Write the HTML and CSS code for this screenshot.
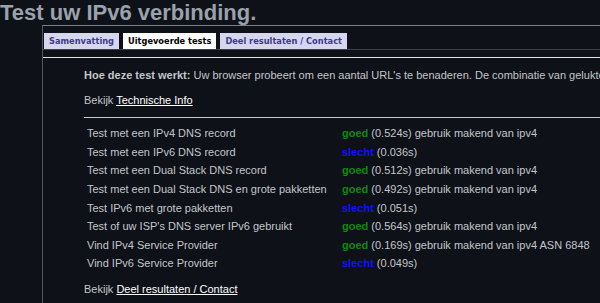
FILE: index.html
```html
<!DOCTYPE html>
<html lang="nl">
<head>
<meta charset="utf-8">
<title>Test uw IPv6 verbinding.</title>
<link rel="stylesheet" href="styles.css">
</head>
<body>
<h1 class="title">Test uw IPv6 verbinding.</h1>
<div class="frame">
  <div class="tabs">
    <span class="tab">Samenvatting</span>
    <span class="tab active">Uitgevoerde tests</span>
    <span class="tab">Deel resultaten / Contact</span>
  </div>
  <div class="panel">
    <p class="intro"><b>Hoe deze test werkt:</b> Uw browser probeert om een aantal URL's te benaderen. De combinatie van gelukte en mislukte pogingen bepaalt de uitslag.</p>
    <p class="see">Bekijk <a href="#">Technische Info</a></p>
    <hr class="rule">
    <table class="results">
      <tr><td class="name">Test met een IPv4 DNS record</td><td><span class="good">goed</span> (0.524s) gebruik makend van ipv4</td></tr>
      <tr><td class="name">Test met een IPv6 DNS record</td><td><span class="bad">slecht</span> (0.036s)</td></tr>
      <tr><td class="name">Test met een Dual Stack DNS record</td><td><span class="good">goed</span> (0.512s) gebruik makend van ipv4</td></tr>
      <tr><td class="name">Test met een Dual Stack DNS en grote pakketten</td><td><span class="good">goed</span> (0.492s) gebruik makend van ipv4</td></tr>
      <tr><td class="name">Test IPv6 met grote pakketten</td><td><span class="bad">slecht</span> (0.051s)</td></tr>
      <tr><td class="name">Test of uw ISP's DNS server IPv6 gebruikt</td><td><span class="good">goed</span> (0.564s) gebruik makend van ipv4</td></tr>
      <tr><td class="name">Vind IPv4 Service Provider</td><td><span class="good">goed</span> (0.169s) gebruik makend van ipv4 ASN 6848</td></tr>
      <tr><td class="name">Vind IPv6 Service Provider</td><td><span class="bad">slecht</span> (0.049s)</td></tr>
    </table>
    <p class="see last">Bekijk <a href="#">Deel resultaten / Contact</a></p>
  </div>
</div>
</body>
</html>
```
FILE: styles.css
```css
html, body {
  margin: 0;
  padding: 0;
  background: #0e1118;
  overflow: hidden;
}
body {
  width: 600px;
  height: 303px;
  font-family: "Liberation Sans", Arial, sans-serif;
  font-size: 11px;
  color: #c4c6c9;
}
.title {
  margin: 0;
  padding: 0;
  height: 25px;
  font-size: 22px;
  line-height: 25px;
  font-weight: bold;
  color: #9aa2ab;
  white-space: nowrap;
}
.frame {
  margin-left: 42px;
  border-top: 1px solid #7b7d82;
  border-left: 1px solid #55585e;
  height: 277px;
  overflow: hidden;
}
.tabs {
  display: flex;
  gap: 4px;
  padding: 7px 0 0 1px;
  border-bottom: 1px solid #3d4047;
}
.tab {
  display: block;
  height: 16px;
  line-height: 16px;
  padding: 0 5px;
  background: #d6d6ef;
  color: #3b3b8a;
  font-family: "DejaVu Sans", Verdana, sans-serif;
  font-size: 8.25px;
  font-weight: bold;
  white-space: nowrap;
}
.tab.active {
  background: #ffffff;
  color: #000000;
}
.panel {
  margin-top: 7px;
  border-top: 1px solid #e2e3e5;
  padding-left: 41px;
}
.intro {
  margin: 10px 0 0 0;
  line-height: 14px;
  white-space: nowrap;
  overflow: hidden;
}
.see {
  margin: 11px 0 0 0;
  line-height: 14px;
  white-space: nowrap;
}
.see a {
  color: #ffffff;
  text-decoration: underline;
}
.rule {
  margin: 10px 0 0 0;
  border: 0;
  border-top: 1px solid #c9cacc;
  height: 0;
}
.results {
  border-collapse: collapse;
  margin-top: 6px;
}
.results td {
  padding: 0 3px;
  height: 18.57px;
  white-space: nowrap;
}
.results td.name {
  width: 249px;
}
.good {
  color: #0d8a0d;
  font-weight: bold;
}
.bad {
  color: #1010ff;
  font-weight: bold;
}
.last {
  margin-top: 9px;
}
```
